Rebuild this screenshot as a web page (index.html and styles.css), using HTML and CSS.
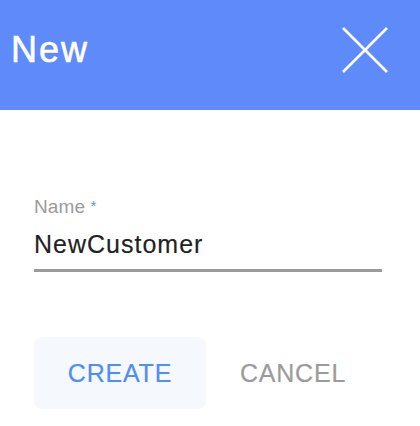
FILE: index.html
```html
<!DOCTYPE html>
<html>
<head>
    <meta charset="utf-8">
    <link rel="stylesheet" href="styles.css">
</head>
<body>

    <div class="dialog">

        <header class="dialog_header">
            <h1 class="dialog_title">New</h1>
            <button class="close_button" type="button" aria-label="Close">
                <svg width="46" height="46" viewBox="0 0 46 46">
                    <path d="M1 1 L45 45 M45 1 L1 45" stroke="#ffffff" stroke-width="2.6" fill="none"/>
                </svg>
            </button>
        </header>

        <section class="dialog_body">
            <label class="field_label" for="name">Name <span class="required">*</span></label>
            <input class="field_input" id="name" type="text" value="NewCustomer">

            <div class="actions">
                <button class="action_button create_button" type="button">CREATE</button>
                <button class="action_button cancel_button" type="button">CANCEL</button>
            </div>
        </section>

    </div>

</body>
</html>
```

FILE: styles.css
```css
/*Page reset.*/
body {
    margin: 0;
    background-color: #ffffff;
    font-family: "Liberation Sans", Arial, sans-serif;
}

/*Header bar.*/
.dialog_header {
    display: flex;
    align-items: center;
    justify-content: space-between;
    height: 100px;
    padding: 0 32px 10px 11px;
    background-color: #5f8afa;
}

.dialog_title {
    margin: 0;
    color: #ffffff;
    font-size: 36px;
    font-weight: normal;
    letter-spacing: 2px;
    -webkit-text-stroke: 0.6px #ffffff;
}

.close_button {
    display: flex;
    padding: 0;
    border: none;
    background: transparent;
}

/*Form area.*/
.dialog_body {
    display: flex;
    flex-direction: column;
    padding: 85px 38px 0 34px;
}

.field_label {
    font-size: 19px;
    line-height: 22px;
    color: #9b9b9b;
    letter-spacing: 0.1px;
}

.required {
    color: #5b93ee;
    font-size: 15px;
    vertical-align: 2px;
}

.field_input {
    margin-top: 11px;
    padding: 0 0 10px 0;
    border: none;
    border-bottom: 3px solid #9b9b9b;
    outline: none;
    font-family: inherit;
    font-size: 25px;
    line-height: 30px;
    height: 30px;
    box-sizing: content-box;
    color: #222222;
    letter-spacing: 1px;
    -webkit-text-stroke: 0.15px #222222;
}

/*Buttons.*/
.actions {
    display: flex;
    gap: 2px;
    margin-top: 65px;
}

.action_button {
    width: 172px;
    height: 72px;
    border: none;
    border-radius: 8px;
    background: transparent;
    font-family: inherit;
    font-size: 25px;
    letter-spacing: 0.8px;
    padding: 0;
}

.create_button {
    background-color: #f5f9fe;
    color: #4f8ef2;
    -webkit-text-stroke: 0.2px #4f8ef2;
}

.cancel_button {
    padding-right: 2px;
    color: #9b9b9b;
    -webkit-text-stroke: 0.2px #9b9b9b;
}
```
